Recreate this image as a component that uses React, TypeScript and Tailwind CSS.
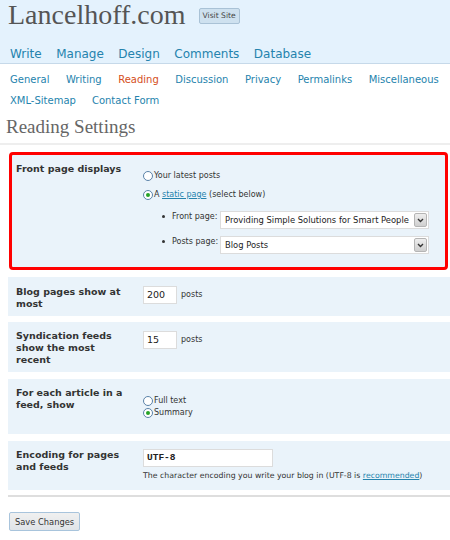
import React from "react";

const topNav = ["Write", "Manage", "Design", "Comments", "Database"];
const subNav1 = ["General", "Writing", "Reading", "Discussion", "Privacy", "Permalinks", "Miscellaneous"];
const subNav2 = ["XML-Sitemap", "Contact Form"];

function Radio({ checked }: { checked?: boolean }) {
  return (
    <span className="w-[10px] h-[10px] rounded-full border border-[#5a82a8] bg-white flex items-center justify-center shrink-0">
      {checked && <span className="w-[4px] h-[4px] rounded-full bg-[#27a327]" />}
    </span>
  );
}

function Select({ value }: { value: string }) {
  return (
    <div className="w-[209px] h-[18px] bg-white border border-[#dcdcdc] flex items-center justify-between pl-[4px] pr-[1px]">
      <span className="text-[8.4px] text-[#222] whitespace-nowrap">{value}</span>
      <span className="w-[13px] h-[14px] bg-gradient-to-b from-[#eeeeee] to-[#cfcfcf] border border-[#b5b5b5] rounded-[2px] flex items-center justify-center">
        <svg width="7" height="5" viewBox="0 0 7 5">
          <path d="M1 1 L3.5 3.5 L6 1" stroke="#333" strokeWidth="1.4" fill="none" />
        </svg>
      </span>
    </div>
  );
}

function Input({ value, w, mono }: { value: string; w: string; mono?: boolean }) {
  return (
    <div className={`${w} h-[18px] bg-white border border-[#dcdcdc] flex items-center pl-[3px] text-[9.5px] text-[#222] ${mono ? "font-['Liberation_Mono',monospace] font-bold" : ""}`}>
      {value}
    </div>
  );
}

export default function App() {
  return (
    <div className="w-[450px] h-[540px] bg-white overflow-hidden font-['DejaVu_Sans',sans-serif] text-[#333]">
      {/* Header */}
      <div className="h-[64px] bg-[#e4f2fd] border-b border-[#c6d9e9] pt-[1px] pl-[8px]">
        <div className="flex items-center">
          <h1 className="font-['Liberation_Serif',serif] text-[28px] leading-[28px] text-[#555]">Lancelhoff.com</h1>
          <span className="ml-[13px] mt-[2px] h-[16px] px-[3px] flex items-center bg-[#cee1ef] border border-[#a9c2d6] rounded-[2px] text-[7.6px] text-[#464646]">
            Visit Site
          </span>
        </div>
        <div className="mt-[17px] pl-[2px] flex gap-x-[14.5px] text-[12px] leading-[16px] text-[#2583ad]">
          {topNav.map((n) => (
            <span key={n}>{n}</span>
          ))}
        </div>
      </div>

      {/* Sub nav */}
      <div className="pt-[5px] pl-[10px] text-[10px] leading-[21px] text-[#2583ad]">
        <div className="flex gap-x-[16.5px]">
          {subNav1.map((n) => (
            <span key={n} className={n === "Reading" ? "text-[#d54e21]" : ""}>
              {n}
            </span>
          ))}
        </div>
        <div className="flex gap-x-[16px]">
          {subNav2.map((n) => (
            <span key={n}>{n}</span>
          ))}
        </div>
      </div>

      <h2 className="mt-[6px] pl-[6px] font-['Liberation_Serif',serif] text-[19px] leading-[20px] text-[#666] pb-[6px] border-b-2 border-[#eeeeee]">
        Reading Settings
      </h2>

      {/* Form */}
      <div className="mt-[7px] pl-[8px] flex flex-col text-[9.5px] leading-[12px]">
        {/* Front page displays */}
        <div className="ml-px mr-[2px] h-[118px] bg-[#eaf3fa] border-[3px] border-[#ff0000] rounded-[4px] flex">
          <div className="w-[131px] pl-[4px] pt-[8px] font-bold">Front page displays</div>
          <div className="pt-[15px] text-[8px]">
            <div className="flex items-center gap-[1px] h-[12px]">
              <Radio />
              <span>Your latest posts</span>
            </div>
            <div className="flex items-center gap-[1px] h-[12px] mt-[7px]">
              <Radio checked />
              <span>
                A <span className="text-[#2583ad] underline">static page</span> (select below)
              </span>
            </div>
            <div className="mt-[10px] flex items-start">
              <span className="ml-[19px] mt-[4px] w-[3px] h-[3px] rounded-full bg-[#333]" />
              <span className="ml-[7px] w-[48px]">Front page:</span>
              <Select value="Providing Simple Solutions for Smart People" />
            </div>
            <div className="mt-[7px] flex items-start">
              <span className="ml-[19px] mt-[4px] w-[3px] h-[3px] rounded-full bg-[#333]" />
              <span className="ml-[7px] w-[48px]">Posts page:</span>
              <Select value="Blog Posts" />
            </div>
          </div>
        </div>

        {/* Blog pages */}
        <div className="mt-[7px] h-[39px] bg-[#eaf3fa] flex">
          <div className="w-[135px] pl-[8px] pr-[17px] pt-[9px] font-bold">Blog pages show at most</div>
          <div className="pt-[9px] flex items-start gap-[4px]">
            <Input value="200" w="w-[34px]" />
            <span className="text-[8px] leading-[18px]">posts</span>
          </div>
        </div>

        {/* Syndication */}
        <div className="mt-[6px] h-[50px] bg-[#eaf3fa] flex">
          <div className="w-[135px] pl-[8px] pr-[17px] pt-[8px] font-bold">Syndication feeds show the most recent</div>
          <div className="pt-[9px] flex items-start gap-[4px]">
            <Input value="15" w="w-[34px]" />
            <span className="text-[8px] leading-[18px]">posts</span>
          </div>
        </div>

        {/* Feed article */}
        <div className="mt-[7px] h-[55px] bg-[#eaf3fa] flex">
          <div className="w-[135px] pl-[8px] pr-[17px] pt-[8px] font-bold">For each article in a feed, show</div>
          <div className="pt-[16px] text-[8px]">
            <div className="flex items-center gap-[1px] h-[12px]">
              <Radio />
              <span>Full text</span>
            </div>
            <div className="flex items-center gap-[1px] h-[12px]">
              <Radio checked />
              <span>Summary</span>
            </div>
          </div>
        </div>

        {/* Encoding */}
        <div className="mt-[7px] h-[49px] bg-[#eaf3fa] flex">
          <div className="w-[135px] pl-[8px] pr-[17px] pt-[8px] font-bold">Encoding for pages and feeds</div>
          <div className="pt-[8px]">
            <Input value="UTF-8" w="w-[130px]" mono />
            <div className="mt-[3px] text-[7.8px] leading-[12px] whitespace-nowrap">
              The character encoding you write your blog in (UTF-8 is{" "}
              <span className="text-[#2583ad] underline">recommended</span>)
            </div>
          </div>
        </div>

        <div className="mt-[5px] border-b-2 border-[#dedede]" />

        <div className="mt-[15px] pl-px">
          <button className="h-[19px] px-[5px] bg-gradient-to-b from-[#f0f0f0] to-[#e0e4e8] border border-[#a8c4dc] rounded-[2px] text-[8.3px] text-[#333] flex items-center">
            Save Changes
          </button>
        </div>
      </div>
    </div>
  );
}
